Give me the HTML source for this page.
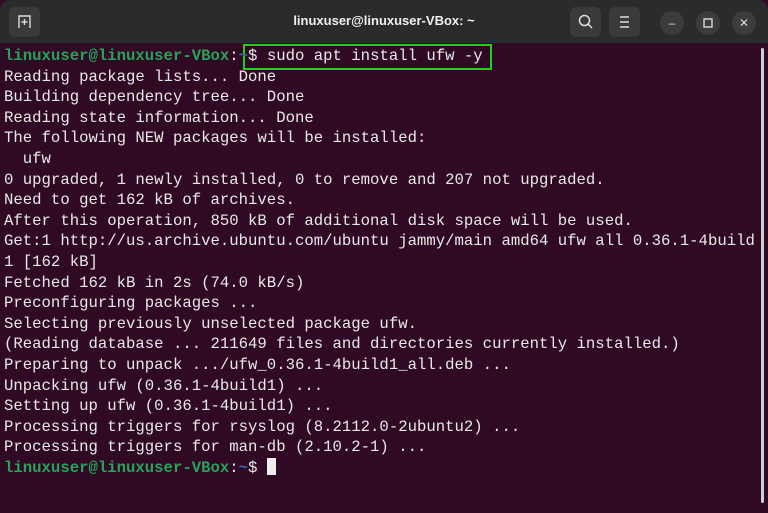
<!DOCTYPE html>
<html><head><style>
body{margin:0;width:768px;height:513px;overflow:hidden;background:#300a24;font-family:"Liberation Mono",monospace;}
.tb{position:absolute;left:0;top:0;width:768px;height:43px;background:#2b2b2b;border-radius:10px 10px 0 0;}
.title{position:absolute;left:0;right:0;top:13px;text-align:center;color:#f0f0f0;font:bold 13px "Liberation Sans",sans-serif;}
.btn{position:absolute;top:7px;width:31px;height:30px;background:#3a3a3a;border-radius:6px;}
.circ{position:absolute;top:11px;width:24px;height:24px;border-radius:12px;background:#3c3c3c;color:#ddd;font:12px "Liberation Sans",sans-serif;text-align:center;line-height:24px;}
.term{position:absolute;left:4px;top:46px;color:#e8e8e8;font-size:15.65px;line-height:20.6px;white-space:pre;}
.g{color:#26a35a;font-weight:bold}.b{color:#3465a4;font-weight:bold}
.box{position:absolute;left:243px;top:44px;width:245px;height:22px;border:2px solid #19d319;}
.cur{display:inline-block;width:9px;height:17px;background:#eee;vertical-align:-3px}
.sb{position:absolute;right:4px;top:48px;width:3px;height:455px;background:#cfcfcf;border-radius:2px}
</style></head><body>
<div class="tb">
<div class="btn" style="left:9px"><svg width="31" height="30"><path d="M10 21V9h11v12M15.5 12v6M12.5 15h6" stroke="#ddd" stroke-width="1.4" fill="none"/></svg></div>
<div class="title">linuxuser@linuxuser-VBox: ~</div>
<div class="btn" style="left:570px"><svg width="31" height="30"><circle cx="14.5" cy="13.5" r="5" stroke="#ddd" stroke-width="1.5" fill="none"/><path d="M18 17l4 4" stroke="#ddd" stroke-width="1.5"/></svg></div>
<div class="btn" style="left:609px"><svg width="31" height="30"><path d="M11 10h9M11 15h9M11 20h9" stroke="#ddd" stroke-width="1.4"/></svg></div>
<div class="circ" style="left:660px">–</div>
<div class="circ" style="left:696px"><svg width="24" height="24"><rect x="8" y="8" width="8" height="8" stroke="#ddd" stroke-width="1.4" fill="none"/></svg></div>
<div class="circ" style="left:732px">✕</div>
</div>
<div class="box"></div>
<div class="sb"></div>
<div class="term"><span class="g">linuxuser@linuxuser-VBox</span>:<span class="b">~</span>$ sudo apt install ufw -y
Reading package lists... Done
Building dependency tree... Done
Reading state information... Done
The following NEW packages will be installed:
  ufw
0 upgraded, 1 newly installed, 0 to remove and 207 not upgraded.
Need to get 162 kB of archives.
After this operation, 850 kB of additional disk space will be used.
Get:1 http://us.archive.ubuntu.com/ubuntu jammy/main amd64 ufw all 0.36.1-4build
1 [162 kB]
Fetched 162 kB in 2s (74.0 kB/s)
Preconfiguring packages ...
Selecting previously unselected package ufw.
(Reading database ... 211649 files and directories currently installed.)
Preparing to unpack .../ufw_0.36.1-4build1_all.deb ...
Unpacking ufw (0.36.1-4build1) ...
Setting up ufw (0.36.1-4build1) ...
Processing triggers for rsyslog (8.2112.0-2ubuntu2) ...
Processing triggers for man-db (2.10.2-1) ...
<span class="g">linuxuser@linuxuser-VBox</span>:<span class="b">~</span>$ <span class="cur"></span></div>
</body></html>
